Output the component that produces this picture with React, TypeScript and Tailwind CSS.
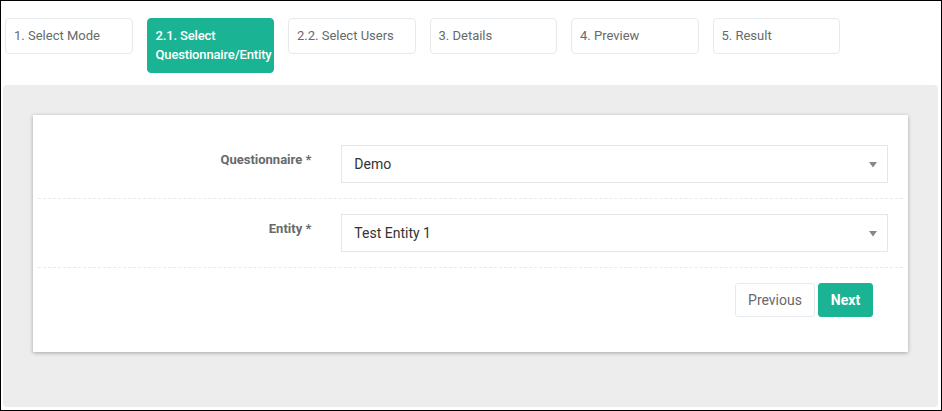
const steps = [
  { id: "mode", label: "1. Select Mode" },
  { id: "questionnaire", label: "2.1. Select Questionnaire/Entity", active: true },
  { id: "users", label: "2.2. Select Users" },
  { id: "details", label: "3. Details" },
  { id: "preview", label: "4. Preview" },
  { id: "result", label: "5. Result" },
];

function SelectBox({ value }: { value: string }) {
  return (
    <div className="flex h-[38px] items-center justify-between border border-[#e5e6e7] bg-white pl-[12px] pr-[10px] text-[14px] text-[#333]">
      <span>{value}</span>
      <svg width="8" height="6" viewBox="0 0 8 6" className="mt-[2px]">
        <path d="M0 0h8L4 5.5z" fill="#888" />
      </svg>
    </div>
  );
}

function FormRow({ label, value }: { label: string; value: string }) {
  return (
    <div className="grid grid-cols-3 border-b border-dashed border-[#e7eaec] py-[15px]">
      <div className="px-[15px] pt-[6px] text-right text-[13px] leading-[18px] font-bold text-[#676a6c]">
        {label}
      </div>
      <div className="col-span-2 px-[15px]">
        <SelectBox value={value} />
      </div>
    </div>
  );
}

export default function App() {
  return (
    <div
      className="flex h-[411px] w-[942px] flex-col border border-black bg-white"
      style={{ fontFamily: "Roboto, 'Liberation Sans', sans-serif" }}
    >
      <div className="flex items-start gap-[14px] pl-[4px] pt-[17px]">
        {steps.map((step) => (
          <div
            key={step.id}
            className={`w-[127.5px] rounded-[4px] border pt-[7px] pb-[8px] pl-[8px] pr-0 text-[13px] leading-[19px] ${
              step.active
                ? "border-[#1ab394] bg-[#1ab394] font-medium tracking-[-0.15px] text-white"
                : "border-[#e7eaec] bg-white text-[#676a6c]"
            }`}
          >
            {step.label}
          </div>
        ))}
      </div>

      <div className="mt-[12px] mb-[3px] ml-[2px] mr-[3px] flex-1 rounded-[4px] bg-[#ededed] p-[30px]">
        <div className="w-[875px] bg-white px-[5px] pt-[15px] pb-[35px] shadow-[0_1px_4px_rgba(0,0,0,0.3)]">
          <FormRow label="Questionnaire *" value="Demo" />
          <FormRow label="Entity *" value="Test Entity 1" />
          <div className="flex justify-end gap-[3px] pr-[30px] pt-[15px]">
            <button
              type="button"
              className="h-[34px] w-[80px] rounded-[3px] border border-[#e7eaec] bg-white text-[14px] leading-[32px] text-[#676a6c]"
            >
              Previous
            </button>
            <button
              type="button"
              className="h-[34px] w-[55px] rounded-[3px] border border-[#1ab394] bg-[#1ab394] text-[14px] leading-[32px] font-bold text-white"
            >
              Next
            </button>
          </div>
        </div>
      </div>
    </div>
  );
}
